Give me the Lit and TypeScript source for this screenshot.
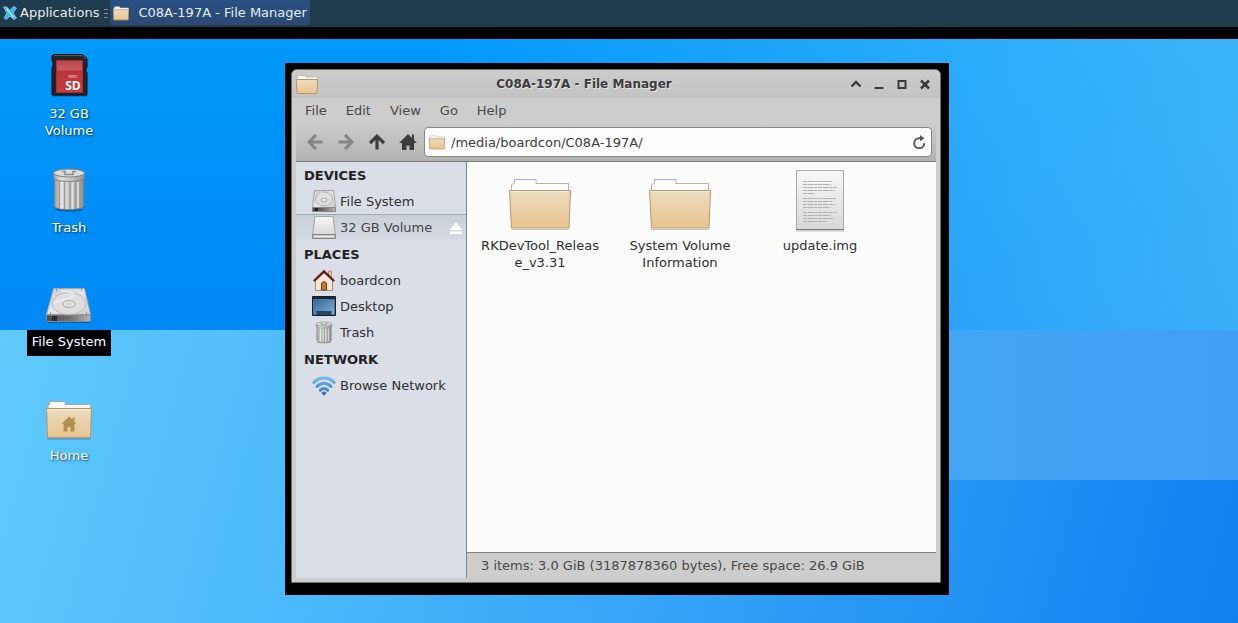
import { LitElement, html, css, svg, nothing, type TemplateResult } from "lit";
import { customElement, state } from "lit/decorators.js";
import { classMap } from "lit/directives/class-map.js";

/* Gradients shared by every icon in the desktop's shadow root. */
const gradients = html`
  <svg class="defs" width="0" height="0" aria-hidden="true">
    <defs>
      <linearGradient id="tan" x1="0" y1="0" x2="0" y2="1">
        <stop offset="0" stop-color="#ecdcc0" />
        <stop offset="1" stop-color="#e8c48f" />
      </linearGradient>
      <linearGradient id="paper" x1="0" y1="0" x2="0" y2="1">
        <stop offset="0" stop-color="#f8f8f8" />
        <stop offset="1" stop-color="#d8d8d8" />
      </linearGradient>
      <linearGradient id="metal" x1="0" y1="0" x2="1" y2="1">
        <stop offset="0" stop-color="#c9c9c9" />
        <stop offset="0.5" stop-color="#e6e6e6" />
        <stop offset="1" stop-color="#cfcfcf" />
      </linearGradient>
      <linearGradient id="base" x1="0" y1="0" x2="1" y2="0">
        <stop offset="0" stop-color="#4c4c4c" />
        <stop offset="0.5" stop-color="#6d6d6d" />
        <stop offset="1" stop-color="#b5b5b5" />
      </linearGradient>
      <linearGradient id="can" x1="0" y1="0" x2="1" y2="0">
        <stop offset="0" stop-color="#9a9a9a" />
        <stop offset="0.25" stop-color="#e4e4e4" />
        <stop offset="0.6" stop-color="#c2c2c2" />
        <stop offset="1" stop-color="#909090" />
      </linearGradient>
      <linearGradient id="red" x1="0" y1="0" x2="0" y2="1">
        <stop offset="0" stop-color="#b5484b" />
        <stop offset="0.3" stop-color="#cb5a5e" />
        <stop offset="0.32" stop-color="#b9343a" />
        <stop offset="1" stop-color="#cb3b3f" />
      </linearGradient>
      <linearGradient id="screen" x1="0" y1="0" x2="1" y2="1">
        <stop offset="0" stop-color="#2f6597" />
        <stop offset="1" stop-color="#7fb4d2" />
      </linearGradient>
      <linearGradient id="wave" gradientUnits="userSpaceOnUse" x1="0" y1="4" x2="0" y2="22">
        <stop offset="0" stop-color="#74bbec" />
        <stop offset="1" stop-color="#2a74c0" />
      </linearGradient>
    </defs>
  </svg>
`;

const icon = (size: number, box: string, body: TemplateResult) =>
  html`<svg width=${size} height=${size} viewBox=${box} aria-hidden="true">${body}</svg>`;

const folderIcon = () => icon(64, "0 0 64 64", svg`
  <path d="M3 61h58v1H3z" fill="#000" opacity=".2"/>
  <path d="M3.500 26V16.500l3-1v-4h21.500v4h32.500V26z" fill="#fff" stroke="#b4b4b8"/>
  <path d="M1.500 22.500h61l-1.500 37.500h-57.500z" fill="url(#tan)" stroke="#b8996a"/>
  <path d="M2.500 23.500h59" stroke="#f6ead4"/>`);

const homeFolderIcon = () => icon(48, "0 0 48 48", svg`
  <path d="M2 45.500h44v1H2z" fill="#000" opacity=".25"/>
  <path d="M3 19V11.500h1.500V8.500h15.500v3h25.500V19z" fill="#f8f8fa" stroke="#a9a9ad"/>
  <path d="M1.500 15.500h45l-1 29h-43z" fill="url(#tan)" stroke="#b29263"/>
  <path d="M2.500 16.500h43" stroke="#f8ecd6"/>
  <path d="M24 23.500l-7.500 7.500h2v7.500h4V34h3v4.500h4V31h2l-2-2v-4.500h-2v2z" fill="#b3904f"/>`);

const smallFolderIcon = (size: number) => icon(size, "0 0 22 22", svg`
  <path d="M1 9V4.500h1V2.500h7.500v1.500h12V9z" fill="#fff" stroke="#bdb7ad" stroke-width=".8"/>
  <path d="M.5 6.500h21L21 20.500H1z" fill="url(#tan)" stroke="#b69761"/>`);

const documentIcon = () => icon(64, "0 0 64 64", svg`
  <path d="M8 63h48" stroke="#000" opacity=".2"/>
  <path d="M8.500 2.500h47v59h-47z" fill="url(#paper)" stroke="#a8a8a8"/>
  <path d="M8 61.700h48" stroke="#707070"/>
  <g stroke="#b0b0b0" stroke-dasharray="4 .7 6 .7 3 .7">
    <path d="M15 13.500h29M15 16.500h28M15 19.500h34M15 22.500h32M15 25.500h11M15 30.500h33M15 33.500h30M15 36.500h32M15 39.500h28M15 44.500h34M15 47.500h28M15 50.500h31M15 53.500h23"/>
  </g>`);

const driveIcon = () => icon(48, "0 0 48 48", svg`
  <path d="M3 42.500h42v1.500H3z" fill="#000" opacity=".3"/>
  <path d="M8.500 9.500h31l6 26H1.500z" fill="url(#metal)" stroke="#a6a6a6"/>
  <path d="M1.500 36h44v5.500a1 1 0 0 1-1 1h-42a1 1 0 0 1-1-1z" fill="url(#base)" stroke="#8a8a8a"/>
  <path d="M7 37h5v5H7z" fill="#2a2a2a"/>
  <ellipse cx="24" cy="24.500" rx="17" ry="11" fill="#dedede" stroke="#bcbcbc"/>
  <path d="M16 12c10 0 16 3 11 6s-13 3-18 6" fill="none" stroke="#ededed" stroke-width="1.500"/>
  <ellipse cx="24" cy="25" rx="6" ry="3.500" fill="#e4e4e4" stroke="#a8a8a8"/>
  <ellipse cx="24" cy="25" rx="3" ry="1.500" fill="#d4d4d4"/>
  <path d="M11 11h1M36 11h1M5 34h1M41 34h1" stroke="#777" stroke-width="1.500"/>`);

const smallDriveIcon = () => icon(24, "0 0 24 24", svg`
  <path d="M2.500 1.500h19l2 17H.5z" fill="url(#metal)" stroke="#a2a2a2"/>
  <path d="M.5 18.500h23v4H.5z" fill="url(#base)" stroke="#888"/>
  <path d="M3 19h3v3H3z" fill="#222"/>
  <ellipse cx="12" cy="10" rx="8.500" ry="7" fill="#dedede" stroke="#b4b4b4"/>
  <path d="M8 4c5 0 7 2 5 3.500s-5 1-7 3" fill="none" stroke="#f0f0f0"/>
  <ellipse cx="12" cy="11" rx="3" ry="2" fill="#e8e8e8" stroke="#a6a6a6"/>`);

const removableIcon = () => icon(24, "0 0 24 24", svg`
  <path d="M3 .5h18L23.500 19H.5z" fill="url(#paper)" stroke="#a4a4a4"/>
  <path d="M.5 18.500h23v4H.5z" fill="#c4c4c4" stroke="#8a8a8a"/>
  <path d="M2 20.500h20" stroke="#f2f2f2"/>`);

const trashIcon = (size: number) => icon(size, "0 0 48 48", svg`
  <ellipse cx="24" cy="44.500" rx="14" ry="2" fill="#000" opacity=".3"/>
  <path d="M9.500 13v28.500c1 4 28 4 29 0V13z" fill="url(#can)" stroke="#808080"/>
  <path d="M14.500 16v27M19.500 17v27M25 17v27M30.500 17v27M35 16v27" stroke="#9b9b9b" stroke-width="1.500"/>
  <path d="M16.500 17v27M27.500 17v27M33 17v26" stroke="#e9e9e9" stroke-width="1.500"/>
  <path d="M8.500 8v5c1 4.500 30 4.500 31 0V8z" fill="url(#can)" stroke="#808080"/>
  <ellipse cx="24" cy="8" rx="15.500" ry="4" fill="#dcdcdc" stroke="#808080"/>
  <path d="M17 6.500h3v3h8v-3h3" fill="none" stroke="#8a8a8a" stroke-width="1.500"/>`);

const cardIcon = () => icon(48, "0 0 48 48", svg`
  <path d="M8 44.500h34" stroke="#000" opacity=".35" stroke-width="2"/>
  <path d="M8.500 3.500h29l4.500 4v9l-1 1v3l1 1v22.500h-35v-28l1-1v-4l-1-1v-5z" fill="#242424" stroke="#111"/>
  <path d="M9.500 4.500h27.500l4 3.500" fill="none" stroke="#555"/>
  <path d="M11.500 9.500h26v32h-26z" fill="url(#red)" stroke="#a03034"/>
  <text x="28" y="27" font-size="4" fill="#f0c8c8" font-family="DejaVu Sans" text-anchor="middle">MMC</text>
  <text x="28" y="39" font-size="12" font-weight="bold" fill="#fff" font-family="Open Sans" text-anchor="middle">SD</text>`);

const houseIcon = () => icon(24, "0 0 24 24", svg`
  <path d="M16.500 3h3v6h-3z" fill="#e9c9ab" stroke="#b97b54" stroke-width=".8"/>
  <path d="M3.500 12L12 4.500l8.500 7.500v10.500h-17z" fill="#f6e6d4" stroke="#b58a6a"/>
  <path d="M9.500 22v-6c0-3 5-3 5 0v6z" fill="#c7753e" stroke="#7d3f1c"/>
  <path d="M2.500 12.500L12 3.500l9.500 9" fill="none" stroke="#5d1a20" stroke-width="2.400" stroke-linecap="round"/>`);

const desktopIcon = () => icon(24, "0 0 24 24", svg`
  <path d="M.5 2.500h23v19H.5z" fill="#1b2733" stroke="#16202a"/>
  <path d="M1.500 5.500h21v15h-21z" fill="url(#screen)" stroke="#4a7ba3"/>
  <path d="M4.500 17h15v4h-15z" fill="#24455f"/>`);

const wifiIcon = () => icon(24, "0 0 24 24", svg`
  <g fill="none" stroke="url(#wave)" stroke-width="3" stroke-linecap="round">
    <path d="M1.800 9.500c5.500-6 14.900-6 20.400 0"/>
    <path d="M5 13.500c4-4.300 10-4.300 14 0"/>
    <path d="M8.300 17.200c2.200-2.200 5.200-2.200 7.400 0"/>
  </g>
  <path d="M9.800 20c1.500-1.300 2.900-1.300 4.400 0L12 22.300z" fill="#2a74bf" stroke="#2a74bf"/>`);

const ejectIcon = () => icon(14, "0 0 14 14", svg`
  <path d="M7 1l6.500 8H.5zM1 10.500h12V13H1z" fill="#fff"/>`);

const backIcon = () => icon(16, "0 0 16 16", svg`
  <path d="M15.500 8H3M9 1L2.200 8 9 15" fill="none" stroke="currentColor" stroke-width="3.200"/>`);
const forwardIcon = () => icon(16, "0 0 16 16", svg`
  <path d="M.5 8H13M7 1l6.800 7L7 15" fill="none" stroke="currentColor" stroke-width="3.200"/>`);
const upIcon = () => icon(16, "0 0 16 16", svg`
  <path d="M8 15.500V3M1 9L8 2.200 15 9" fill="none" stroke="currentColor" stroke-width="3.200"/>`);
const homeIcon = () => icon(18, "0 0 18 18", svg`
  <path d="M9 1L0 10h3v7h4.500v-4.500h3V17H15v-7h3l-3-3V1.500h-2V5z" fill="currentColor"/>`);
const reloadIcon = () => icon(14, "0 0 14 14", svg`
  <path d="M10 3.200H7a5 5 0 1 0 5.200 5" fill="none" stroke="currentColor" stroke-width="2"/>
  <path d="M8 0v6.400L12.500 3.200z" fill="currentColor"/>`);

const shadeIcon = () => icon(12, "0 0 12 12", svg`
  <path d="M1.500 8.500L6 4l4.500 4.500" fill="none" stroke="currentColor" stroke-width="2.400"/>`);
const minimizeIcon = () => icon(12, "0 0 12 12", svg`
  <path d="M1.500 10h9" stroke="currentColor" stroke-width="2"/>`);
const maximizeIcon = () => icon(12, "0 0 12 12", svg`
  <path d="M2.500 3h7v7h-7z" fill="none" stroke="currentColor" stroke-width="2"/>`);
const closeIcon = () => icon(12, "0 0 12 12", svg`
  <path d="M2 2.500l8 8M10 2.500l-8 8" stroke="currentColor" stroke-width="2.600"/>`);

const mouseIcon = () => icon(16, "0 0 16 16", svg`
  <path d="M1.500 2l3.500 0L8 5.500 11.500 1.500l3 1.500L11 8l3.500 5-2.500 1.500L8 11 4.500 14.500 2 13l3-5z" fill="#3fb6e8" stroke="#7fd6f6" stroke-width=".8"/>
  <path d="M4.500 3.500l7 9" stroke="#a8e6fb" stroke-width="1.500"/>`);
const handleIcon = () => html`
  <svg width="4" height="10" viewBox="0 0 4 10" aria-hidden="true">
    <path d="M0 1.500h4M0 5.500h4M0 9.500h4" stroke="#8296a2" />
  </svg>`;

interface Entry { label: string; icon: () => TemplateResult; eject?: boolean; }

@customElement("app-root")
export class AppRoot extends LitElement {
  static styles = css`
    :host {
      display: block;
      font: 13px/17px "DejaVu Sans", sans-serif;
      color: #303030;
    }
    * { box-sizing: border-box; }
    svg { display: block; flex: none; }
    .defs { position: absolute; }
    button, input {
      margin: 0;
      padding: 0;
      border: 0;
      background: none;
      font: inherit;
      color: inherit;
      text-align: inherit;
    }
    .screen { display: flex; flex-direction: column; min-height: 100vh; }

    .panel {
      display: flex;
      align-items: flex-start;
      height: 39px;
      background: #1e3c4e;
      border-bottom: 12px solid #000;
      color: #e6ecf0;
    }
    .launcher, .task { display: flex; align-items: center; height: 25px; }
    .launcher { gap: 2px; padding-left: 2px; }
    .grip { padding: 8px 2px 0 5px; }
    .task {
      gap: 9px;
      width: 200px;
      padding-left: 3px;
      border-radius: 2px;
      background: linear-gradient(#285083, #2c4a72);
      white-space: nowrap;
    }

    .desktop {
      position: relative;
      flex: 1;
      background:
        linear-gradient(90deg, transparent 35%, rgba(80, 190, 250, 0.5) 77%, rgba(88, 196, 250, 0.66) 100%) 0 0 / 100% 291px no-repeat,
        linear-gradient(#0299fb, #0188f5) 0 0 / 100% 291px no-repeat,
        linear-gradient(90deg, transparent 70%, #42a5f5 75%, #429ff4 100%) 0 291px / 100% 150px no-repeat,
        linear-gradient(105deg, #60cafc 0%, #50bdfb 22%, #3aa7f8 50%, #2595f4 75%, #0f80f0 100%) 0 291px / 100% calc(100% - 291px) no-repeat;
    }
    .shortcuts {
      display: flex;
      flex-direction: column;
      width: 138px;
      padding-top: 12px;
    }
    .shortcut {
      display: flex;
      flex-direction: column;
      align-items: center;
      gap: 3px;
      min-height: 114px;
      color: #fff;
      text-align: center;
    }
    .caption {
      max-width: 90px;
      padding: 3px 5px 6px;
      text-shadow: 1px 1px 2px rgba(0, 20, 60, 0.8);
    }
    .current .caption { background: #000; }

    .backdrop {
      position: absolute;
      inset: 24px 289px 28px 285px;
      display: flex;
      padding: 6px 8px 12px 6px;
      background: #000;
    }
    .window {
      flex: 1;
      min-width: 0;
      display: flex;
      flex-direction: column;
      padding: 0 4px 4px;
      border: 1px solid #707070;
      border-radius: 6px 6px 1px 1px;
      background: #cdcdcd;
    }
    .titlebar {
      display: flex;
      align-items: center;
      height: 28px;
      margin: 0 -4px;
      padding: 0 4px;
      border-radius: 5px 5px 0 0;
      background: linear-gradient(#cbcbcb, #c4c4c4);
      color: #3c3c3c;
    }
    .title {
      flex: 1;
      margin: 0;
      font-size: 12px;
      font-weight: bold;
      text-align: center;
      text-shadow: 1px 1px 0 #e6e6e6;
    }
    .controls { display: flex; gap: 11px; padding-right: 5px; }
    .menubar { display: flex; gap: 1px; height: 24px; color: #484848; }
    .menu { padding: 0 9px; }
    .toolbar {
      display: flex;
      align-items: center;
      height: 40px;
      padding: 1px 4px 0 3px;
      border-bottom: 1px solid #7d7d7d;
      background: linear-gradient(#cdcdcd, #b2b2b2);
      color: #3c3c3c;
    }
    .tool {
      display: flex;
      align-items: center;
      justify-content: center;
      width: 31px;
      height: 30px;
      flex: none;
    }
    .tool:disabled { color: #858585; }
    .location {
      flex: 1;
      display: flex;
      align-items: center;
      gap: 6px;
      height: 30px;
      margin-left: 1px;
      padding: 0 5px 0 4px;
      border: 1px solid #878787;
      border-radius: 4px;
      background: #fdfdfd;
    }
    .path { flex: 1; min-width: 0; outline: none; }
    .reload { color: #5a5a5a; }

    .body { flex: 1; display: flex; min-height: 0; }
    .sidebar {
      width: 171px;
      border-right: 1px solid #80848a;
      background: #dadee6;
    }
    .group + .group { margin-top: 1px; }
    .heading {
      margin: 0;
      padding: 5px 8px 4px;
      font-size: 13px;
      font-weight: bold;
      line-height: 17px;
      color: #222;
    }
    .row { display: flex; align-items: center; height: 26px; padding-right: 3px; }
    .place { flex: 1; display: flex; align-items: center; gap: 4px; padding-left: 16px; }
    .row.active {
      border-top: 1px solid #a2a8b2;
      background: linear-gradient(#c9cfd8, #d6dbe3);
      color: #444;
    }

    .main { flex: 1; min-width: 0; display: flex; flex-direction: column; }
    .files {
      flex: 1;
      display: grid;
      grid-template-columns: repeat(auto-fill, 140px);
      align-content: start;
      padding: 6px 3px;
      background: #fcfcfc;
    }
    .file {
      display: flex;
      flex-direction: column;
      align-items: center;
      gap: 5px;
      text-align: center;
    }
    .name { max-width: 124px; overflow-wrap: anywhere; }
    .status {
      height: 26px;
      margin: 0;
      padding: 4px 14px;
      border-top: 1px solid #808080;
      color: #484848;
    }
  `;

  @state() private activePlace = "32 GB Volume";
  @state() private activeShortcut = "File System";

  private shortcuts: Entry[] = [
    { label: "32 GB Volume", icon: cardIcon },
    { label: "Trash", icon: () => trashIcon(48) },
    { label: "File System", icon: driveIcon },
    { label: "Home", icon: homeFolderIcon },
  ];

  private groups: { title: string; places: Entry[] }[] = [
    { title: "DEVICES", places: [
      { label: "File System", icon: smallDriveIcon },
      { label: "32 GB Volume", icon: removableIcon, eject: true },
    ] },
    { title: "PLACES", places: [
      { label: "boardcon", icon: houseIcon },
      { label: "Desktop", icon: desktopIcon },
      { label: "Trash", icon: () => trashIcon(24) },
    ] },
    { title: "NETWORK", places: [{ label: "Browse Network", icon: wifiIcon }] },
  ];

  private files: Entry[] = [
    { label: "RKDevTool_Release_v3.31", icon: folderIcon },
    { label: "System Volume Information", icon: folderIcon },
    { label: "update.img", icon: documentIcon },
  ];

  private renderPlace(place: Entry) {
    return html`
      <div class=${classMap({ row: true, active: place.label === this.activePlace })}>
        <button class="place" @click=${() => (this.activePlace = place.label)}>
          ${place.icon()}<span>${place.label}</span>
        </button>
        ${place.eject ? html`<button aria-label="Eject">${ejectIcon()}</button>` : nothing}
      </div>`;
  }

  render() {
    return html`
      ${gradients}
      <div class="screen">
        <header class="panel">
          <button class="launcher">${mouseIcon()}<span>Applications</span></button>
          <span class="grip">${handleIcon()}</span>
          <button class="task">${smallFolderIcon(16)}<span>C08A-197A - File Manager</span></button>
        </header>
        <main class="desktop">
          <nav class="shortcuts" aria-label="Desktop">
            ${this.shortcuts.map((s) => html`
              <button
                class=${classMap({ shortcut: true, current: s.label === this.activeShortcut })}
                @click=${() => (this.activeShortcut = s.label)}
              >${s.icon()}<span class="caption">${s.label}</span></button>`)}
          </nav>
          <div class="backdrop">
            <section class="window">
              <header class="titlebar">
                ${smallFolderIcon(22)}
                <h1 class="title">C08A-197A - File Manager</h1>
                <div class="controls">
                  <button aria-label="Shade">${shadeIcon()}</button>
                  <button aria-label="Minimize">${minimizeIcon()}</button>
                  <button aria-label="Maximize">${maximizeIcon()}</button>
                  <button aria-label="Close">${closeIcon()}</button>
                </div>
              </header>
              <nav class="menubar">
                ${["File", "Edit", "View", "Go", "Help"].map((m) => html`<button class="menu">${m}</button>`)}
              </nav>
              <div class="toolbar">
                <button class="tool" aria-label="Back" disabled>${backIcon()}</button>
                <button class="tool" aria-label="Forward" disabled>${forwardIcon()}</button>
                <button class="tool" aria-label="Up">${upIcon()}</button>
                <button class="tool" aria-label="Home">${homeIcon()}</button>
                <div class="location">
                  ${smallFolderIcon(16)}
                  <input class="path" type="text" aria-label="Location" .value=${"/media/boardcon/C08A-197A/"} />
                  <button class="reload" aria-label="Reload">${reloadIcon()}</button>
                </div>
              </div>
              <div class="body">
                <aside class="sidebar">
                  ${this.groups.map((g) => html`
                    <section class="group">
                      <h2 class="heading">${g.title}</h2>
                      ${g.places.map((p) => this.renderPlace(p))}
                    </section>`)}
                </aside>
                <div class="main">
                  <div class="files">
                    ${this.files.map((f) => html`
                      <button class="file">${f.icon()}<span class="name">${f.label}</span></button>`)}
                  </div>
                  <p class="status">3 items: 3.0 GiB (3187878360 bytes), Free space: 26.9 GiB</p>
                </div>
              </div>
            </section>
          </div>
        </main>
      </div>
    `;
  }
}
